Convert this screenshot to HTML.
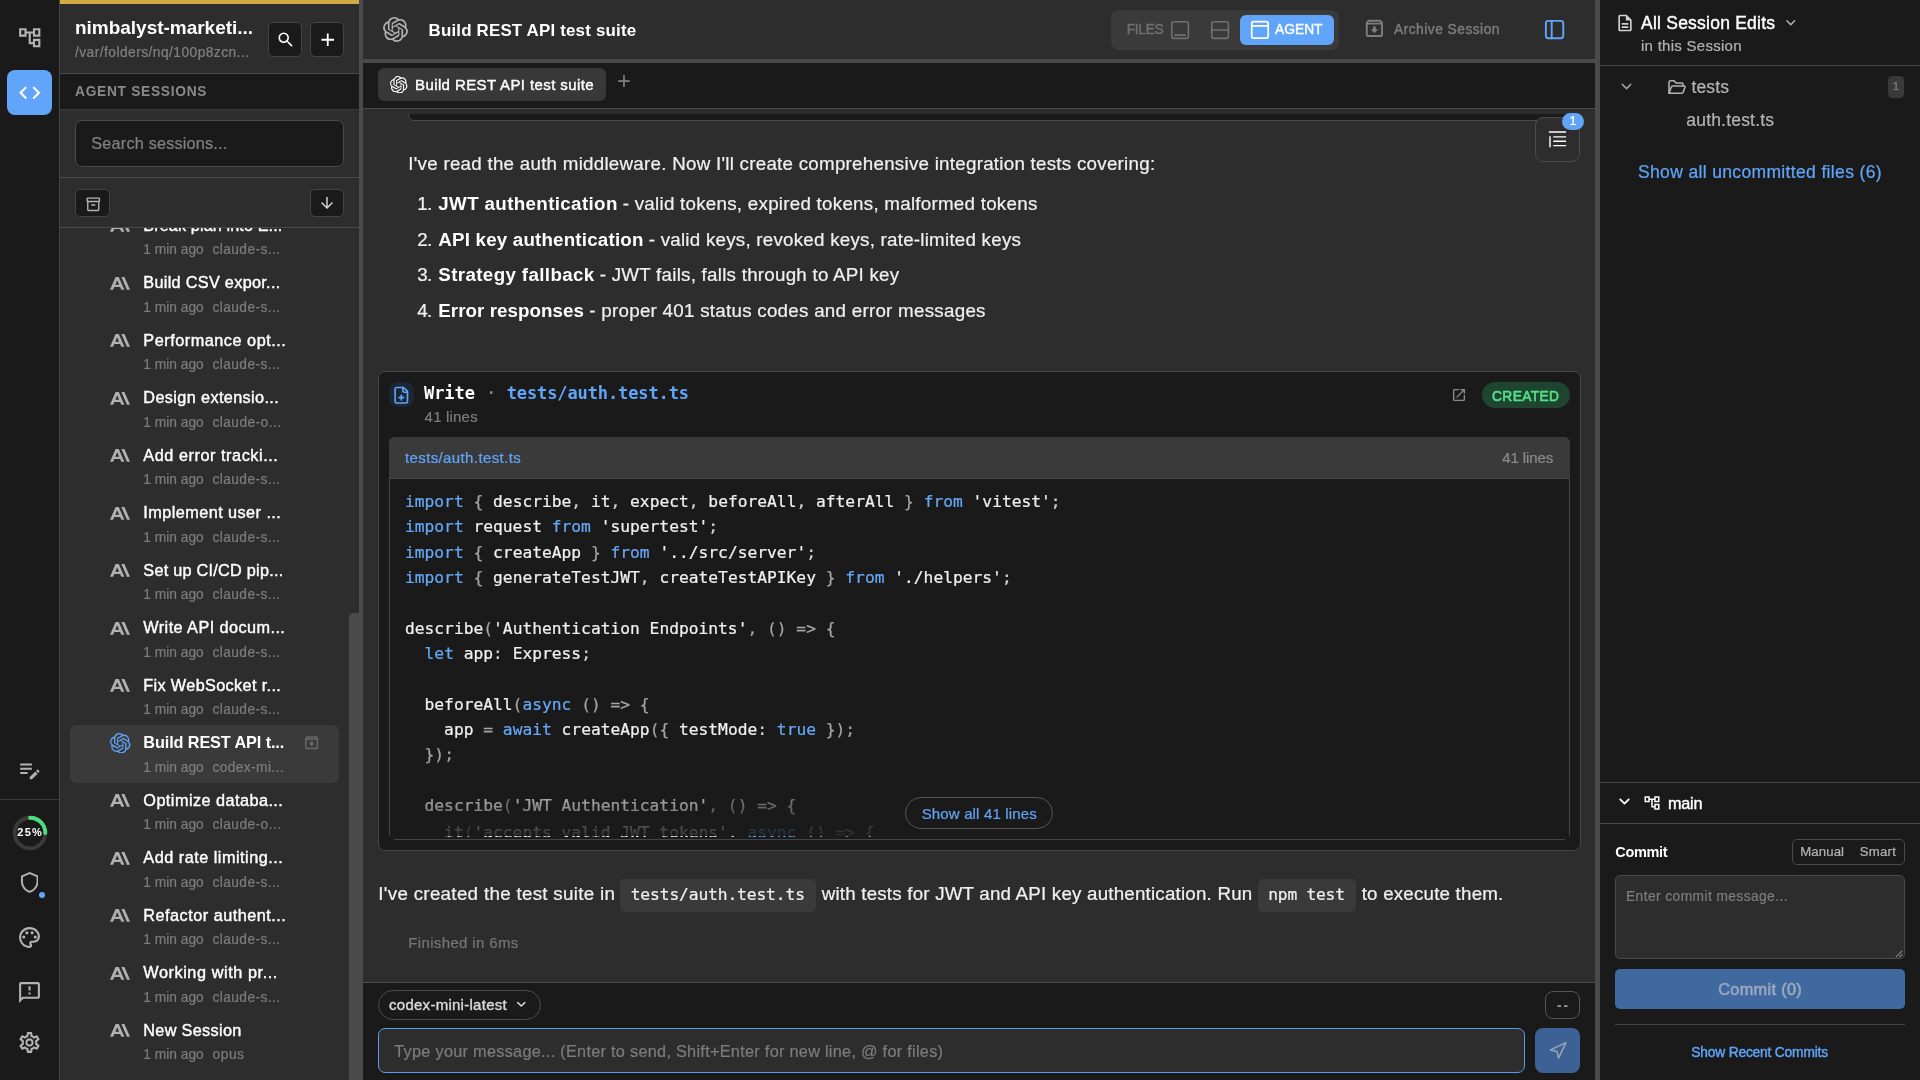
<!DOCTYPE html>
<html lang="en"><head><meta charset="utf-8"><title>Build REST API test suite</title>
<style>
*{margin:0;padding:0;box-sizing:border-box}
html,body{width:1920px;height:1080px;overflow:hidden;background:#2d2d2d}
body{position:relative;font-family:"Liberation Sans", sans-serif;-webkit-font-smoothing:antialiased}
#app{position:absolute;left:0;top:0;width:1920px;height:1080px;will-change:transform}
.b{position:absolute;display:block}
.t{position:absolute;white-space:pre;line-height:1}
.s{font-family:"Liberation Sans", sans-serif}
.m{font-family:"DejaVu Sans Mono", "Liberation Mono", monospace}
.r{-webkit-text-stroke:0.22px}
b{font-weight:700}
</style></head>
<body>
<div id="app">
<div class="b" style="left:0px;top:0px;width:59px;height:1080px;background:#1a1a1a;"></div>
<div class="b" style="left:59px;top:0px;width:1px;height:1080px;background:#464646;"></div>
<div class="b" style="left:60px;top:0px;width:299px;height:1080px;background:#2d2d2d;"></div>
<div class="b" style="left:359px;top:0px;width:4px;height:1080px;background:#4a4a4a;"></div>
<div class="b" style="left:363px;top:0px;width:1232px;height:1080px;background:#2d2d2d;"></div>
<div class="b" style="left:1595px;top:0px;width:5px;height:1080px;background:#4a4a4a;"></div>
<div class="b" style="left:1600px;top:0px;width:320px;height:1080px;background:#1a1a1a;"></div>
<svg class="b" style="left:16.6px;top:24.5px;" width="25.5" height="25.5" viewBox="0 0 24 24"><path fill="#b3b3b3" d="M22 11V3h-7v3H9V3H2v8h7V8h2v10h4v3h7v-8h-7v3h-2V8h2v3h7zM7 9H4V5h3v4zm10 6h3v4h-3v-4zm0-10h3v4h-3V5z"/></svg>
<div class="b" style="left:7px;top:70px;width:45px;height:45px;background:#60a5fa;border-radius:8px;"></div>
<svg class="b" style="left:16.75px;top:79.75px;" width="25.5" height="25.5" viewBox="0 0 24 24"><path fill="#ffffff" d="M9.4 16.6L4.8 12l4.6-4.6L8 6l-6 6 6 6 1.4-1.4zm5.2 0l4.6-4.6-4.6-4.6L16 6l6 6-6 6-1.4-1.4z"/></svg>
<svg class="b" style="left:17.4px;top:757.2px;" width="25.5" height="25.5" viewBox="0 0 24 24"><path fill="#b3b3b3" d="M3 10h11v2H3v-2zm0-2h11V6H3v2zm0 8h7v-2H3v2zm15.01-3.13l.71-.71c.39-.39 1.02-.39 1.41 0l.71.71c.39.39.39 1.02 0 1.41l-.71.71-2.12-2.12zm-.71.71l-5.3 5.3V21h2.12l5.3-5.3-2.12-2.12z"/></svg>
<div class="b" style="left:0px;top:799px;width:59px;height:1px;background:#3a3a3a;"></div>
<svg class="b" style="left:11.8px;top:814.6px;" width="36" height="36" viewBox="0 0 36 36"><circle cx="18" cy="18" r="15.3" fill="none" stroke="#3a3a3a" stroke-width="3.9"/><path d="M18 2.7 A15.3 15.3 0 0 1 33.3 18" fill="none" stroke="#4ade80" stroke-width="3.9" stroke-linecap="round"/></svg>
<div class="t s" style="top:827px;font-size:11px;color:#ffffff;font-weight:700;letter-spacing:1.23px;left:17.35px;">25%</div>
<svg class="b" style="left:20.8px;top:872px;" width="17.5" height="20.8" viewBox="3 1 18 22" preserveAspectRatio="none"><path fill="#b3b3b3" d="M12 1L3 5v6c0 5.55 3.84 10.74 9 12 5.16-1.26 9-6.45 9-12V5l-9-4zm0 2.18l7 3.12v4.7c0 4.52-2.98 8.69-7 9.93-4.02-1.24-7-5.41-7-9.93V6.3l7-3.12z"/></svg>
<div class="b" style="left:39px;top:892px;width:6.4px;height:6.4px;background:#60a5fa;border-radius:50%;"></div>
<svg class="b" style="left:17px;top:924.9px;" width="25" height="25" viewBox="0 0 24 24"><path fill="#b3b3b3" d="M12 22C6.49 22 2 17.51 2 12S6.49 2 12 2s10 4.04 10 9c0 3.31-2.69 6-6 6h-1.77c-.28 0-.5.22-.5.5 0 .12.05.23.13.33.41.47.64 1.06.64 1.67A2.5 2.5 0 0 1 12 22zm0-18c-4.41 0-8 3.59-8 8s3.59 8 8 8c.28 0 .5-.22.5-.5a.54.54 0 0 0-.14-.35c-.41-.46-.63-1.05-.63-1.65a2.5 2.5 0 0 1 2.5-2.5H16c2.21 0 4-1.79 4-4 0-3.86-3.59-7-8-7z"/></svg>
<svg class="b" style="left:17px;top:924.9px;" width="25" height="25" viewBox="0 0 24 24"><g fill="#b3b3b3"><circle cx="6.5" cy="11.5" r="1.5"/><circle cx="9.5" cy="7.5" r="1.5"/><circle cx="14.5" cy="7.5" r="1.5"/><circle cx="17.5" cy="11.5" r="1.5"/></g></svg>
<svg class="b" style="left:17px;top:979.7px;" width="25" height="25" viewBox="0 0 24 24"><path fill="#b3b3b3" d="M20 2H4c-1.1 0-1.99.9-1.99 2L2 22l4-4h14c1.1 0 2-.9 2-2V4c0-1.1-.9-2-2-2zm0 14H5.17L4 17.17V4h16v12zm-9-4h2v2h-2zm0-6h2v4h-2z"/></svg>
<svg class="b" style="left:17px;top:1030px;" width="25" height="25" viewBox="0 0 24 24"><path fill="#b3b3b3" d="M19.43 12.98c.04-.32.07-.64.07-.98 0-.34-.03-.66-.07-.98l2.11-1.65c.19-.15.24-.42.12-.64l-2-3.46a.5.5 0 0 0-.61-.22l-2.49 1c-.52-.4-1.08-.73-1.69-.98l-.38-2.65A.488.488 0 0 0 14 2h-4c-.25 0-.46.18-.49.42l-.38 2.65c-.61.25-1.17.59-1.69.98l-2.49-1a.566.566 0 0 0-.18-.03c-.17 0-.34.09-.43.25l-2 3.46c-.13.22-.07.49.12.64l2.11 1.65c-.04.32-.07.65-.07.98 0 .33.03.66.07.98l-2.11 1.65c-.19.15-.24.42-.12.64l2 3.46a.5.5 0 0 0 .61.22l2.49-1c.52.4 1.08.73 1.69.98l.38 2.65c.03.24.24.42.49.42h4c.25 0 .46-.18.49-.42l.38-2.65c.61-.25 1.17-.59 1.69-.98l2.49 1c.06.02.12.03.18.03.17 0 .34-.09.43-.25l2-3.46c.12-.22.07-.49-.12-.64l-2.11-1.65zm-1.98-1.71c.04.31.05.52.05.73 0 .21-.02.43-.05.73l-.14 1.13.89.7 1.08.84-.7 1.21-1.27-.51-1.04-.42-.9.68c-.43.32-.84.56-1.25.73l-1.06.43-.16 1.13-.2 1.35h-1.4l-.19-1.35-.16-1.13-1.06-.43c-.43-.18-.83-.41-1.23-.71l-.91-.7-1.06.43-1.27.51-.7-1.21 1.08-.84.89-.7-.14-1.13c-.03-.31-.05-.54-.05-.74s.02-.43.05-.73l.14-1.13-.89-.7-1.08-.84.7-1.21 1.27.51 1.04.42.9-.68c.43-.32.84-.56 1.25-.73l1.06-.43.16-1.13.2-1.35h1.39l.19 1.35.16 1.13 1.06.43c.43.18.83.41 1.23.71l.91.7 1.06-.43 1.27-.51.7 1.21-1.07.85-.89.7.14 1.13zM12 8c-2.21 0-4 1.79-4 4s1.79 4 4 4 4-1.79 4-4-1.79-4-4-4zm0 6c-1.1 0-2-.9-2-2s.9-2 2-2 2 .9 2 2-.9 2-2 2z"/></svg>
<div class="b" style="left:59.6px;top:0px;width:299.4px;height:4px;background:#cfaa47;"></div>
<div class="t s" style="top:18px;font-size:19px;color:#ffffff;font-weight:700;letter-spacing:-0.02px;left:75px;">nimbalyst-marketi...</div>
<div class="t s r" style="top:46px;font-size:13.75px;color:#808080;letter-spacing:0.46px;left:75px;">/var/folders/nq/100p8zcn...</div>
<div class="b" style="left:268px;top:22px;width:34px;height:35px;background:#1a1a1a;border:1px solid #444444;border-radius:5px;"></div>
<svg class="b" style="left:275.5px;top:30px;" width="19.5" height="19.5" viewBox="0 0 24 24"><path fill="#ffffff" d="M15.5 14h-.79l-.28-.27A6.471 6.471 0 0 0 16 9.5 6.5 6.5 0 1 0 9.5 16c1.61 0 3.09-.59 4.23-1.57l.27.28v.79l5 4.99L20.49 19l-4.99-5zm-6 0C7.01 14 5 11.99 5 9.5S7.01 5 9.5 5 14 7.01 14 9.5 11.99 14 9.5 14z"/></svg>
<div class="b" style="left:310px;top:22px;width:34px;height:35px;background:#1a1a1a;border:1px solid #444444;border-radius:5px;"></div>
<svg class="b" style="left:316.5px;top:29px;" width="21.5" height="21.5" viewBox="0 0 24 24"><path fill="#ffffff" d="M19 13h-6v6h-2v-6H5v-2h6V5h2v6h6v2z"/></svg>
<div class="b" style="left:60px;top:73px;width:299px;height:1px;background:#4a4a4a;"></div>
<div class="b" style="left:60px;top:74px;width:299px;height:35px;background:#1a1a1a;"></div>
<div class="t s" style="top:85px;font-size:13.75px;color:#8a8a8a;font-weight:700;letter-spacing:0.71px;left:75px;">AGENT SESSIONS</div>
<div class="b" style="left:60px;top:109px;width:299px;height:1px;background:#3a3a3a;"></div>
<div class="b" style="left:75px;top:120px;width:269px;height:46.5px;background:#1a1a1a;border:1px solid #4a4a4a;border-radius:7px;"></div>
<div class="t s r" style="top:135px;font-size:16.25px;color:#808080;letter-spacing:0.19px;left:91.3px;">Search sessions...</div>
<div class="b" style="left:60px;top:177px;width:299px;height:1px;background:#4a4a4a;"></div>
<div class="b" style="left:75px;top:188.5px;width:34.5px;height:28px;background:#1a1a1a;border:1px solid #444444;border-radius:5px;"></div>
<svg class="b" style="left:84.5px;top:195.5px;" width="16.5" height="16.5" viewBox="0 0 24 24"><path fill="#b3b3b3" d="M20 2H4c-1 0-2 .9-2 2v3.01c0 .72.43 1.34 1 1.69V20c0 1.1 1.1 2 2 2h14c.9 0 2-.9 2-2V8.7c.57-.35 1-.97 1-1.69V4c0-1.1-1-2-2-2zm-1 18H5V9h14v11zm1-13H4V4h16v3zM9 12h6v2H9z"/></svg>
<div class="b" style="left:310px;top:188.5px;width:34px;height:28px;background:#1a1a1a;border:1px solid #444444;border-radius:5px;"></div>
<svg class="b" style="left:318.1px;top:194.3px;" width="18" height="18" viewBox="0 0 24 24"><path fill="#d0d0d0" d="M20 12l-1.41-1.41L13 16.17V4h-2v12.17l-5.58-5.59L4 12l8 8 8-8z"/></svg>
<div class="b" style="left:60px;top:227px;width:299px;height:1px;background:#4a4a4a;"></div>
<div class="b" style="left:60px;top:228px;width:299px;height:852px;overflow:hidden">
<svg class="b" style="left:50px;top:-8.6px;" width="20" height="12.8" viewBox="0 3.54 24 16.92" preserveAspectRatio="none"><path fill="#b0b0b0" d="M17.3041 3.541h-3.6718l6.696 16.918H24Zm-10.6082 0L0 20.459h3.7442l1.3693-3.5527h7.0052l1.3693 3.5528h3.7442L10.5363 3.5409Zm-.3712 10.2232 2.2914-5.9456 2.2914 5.9456Z"/></svg>
<div class="t s" style="top:-11px;font-size:16.25px;color:#ffffff;-webkit-text-stroke:0.4px;letter-spacing:0.09px;left:83.3px;">Break plan into E...</div>
<div class="t s r" style="top:15px;font-size:13.75px;color:#7c7c7c;letter-spacing:0.01px;left:83.3px;">1 min ago</div>
<div class="t s r" style="top:15px;font-size:13.75px;color:#7c7c7c;letter-spacing:0.41px;left:152.5px;">claude-s...</div>
<svg class="b" style="left:50px;top:48.9px;" width="20" height="12.8" viewBox="0 3.54 24 16.92" preserveAspectRatio="none"><path fill="#b0b0b0" d="M17.3041 3.541h-3.6718l6.696 16.918H24Zm-10.6082 0L0 20.459h3.7442l1.3693-3.5527h7.0052l1.3693 3.5528h3.7442L10.5363 3.5409Zm-.3712 10.2232 2.2914-5.9456 2.2914 5.9456Z"/></svg>
<div class="t s" style="top:46px;font-size:16.25px;color:#ffffff;-webkit-text-stroke:0.4px;letter-spacing:0.3px;left:83.3px;">Build CSV expor...</div>
<div class="t s r" style="top:73px;font-size:13.75px;color:#7c7c7c;letter-spacing:0.01px;left:83.3px;">1 min ago</div>
<div class="t s r" style="top:73px;font-size:13.75px;color:#7c7c7c;letter-spacing:0.41px;left:152.5px;">claude-s...</div>
<svg class="b" style="left:50px;top:106.4px;" width="20" height="12.8" viewBox="0 3.54 24 16.92" preserveAspectRatio="none"><path fill="#b0b0b0" d="M17.3041 3.541h-3.6718l6.696 16.918H24Zm-10.6082 0L0 20.459h3.7442l1.3693-3.5527h7.0052l1.3693 3.5528h3.7442L10.5363 3.5409Zm-.3712 10.2232 2.2914-5.9456 2.2914 5.9456Z"/></svg>
<div class="t s" style="top:104px;font-size:16.25px;color:#ffffff;-webkit-text-stroke:0.4px;letter-spacing:0.52px;left:83.3px;">Performance opt...</div>
<div class="t s r" style="top:130px;font-size:13.75px;color:#7c7c7c;letter-spacing:0.01px;left:83.3px;">1 min ago</div>
<div class="t s r" style="top:130px;font-size:13.75px;color:#7c7c7c;letter-spacing:0.41px;left:152.5px;">claude-s...</div>
<svg class="b" style="left:50px;top:163.9px;" width="20" height="12.8" viewBox="0 3.54 24 16.92" preserveAspectRatio="none"><path fill="#b0b0b0" d="M17.3041 3.541h-3.6718l6.696 16.918H24Zm-10.6082 0L0 20.459h3.7442l1.3693-3.5527h7.0052l1.3693 3.5528h3.7442L10.5363 3.5409Zm-.3712 10.2232 2.2914-5.9456 2.2914 5.9456Z"/></svg>
<div class="t s" style="top:161px;font-size:16.25px;color:#ffffff;-webkit-text-stroke:0.4px;letter-spacing:0.37px;left:83.3px;">Design extensio...</div>
<div class="t s r" style="top:188px;font-size:13.75px;color:#7c7c7c;letter-spacing:0.01px;left:83.3px;">1 min ago</div>
<div class="t s r" style="top:188px;font-size:13.75px;color:#7c7c7c;letter-spacing:0.43px;left:152.5px;">claude-o...</div>
<svg class="b" style="left:50px;top:221.4px;" width="20" height="12.8" viewBox="0 3.54 24 16.92" preserveAspectRatio="none"><path fill="#b0b0b0" d="M17.3041 3.541h-3.6718l6.696 16.918H24Zm-10.6082 0L0 20.459h3.7442l1.3693-3.5527h7.0052l1.3693 3.5528h3.7442L10.5363 3.5409Zm-.3712 10.2232 2.2914-5.9456 2.2914 5.9456Z"/></svg>
<div class="t s" style="top:219px;font-size:16.25px;color:#ffffff;-webkit-text-stroke:0.4px;letter-spacing:0.55px;left:83.3px;">Add error tracki...</div>
<div class="t s r" style="top:245px;font-size:13.75px;color:#7c7c7c;letter-spacing:0.01px;left:83.3px;">1 min ago</div>
<div class="t s r" style="top:245px;font-size:13.75px;color:#7c7c7c;letter-spacing:0.41px;left:152.5px;">claude-s...</div>
<svg class="b" style="left:50px;top:278.9px;" width="20" height="12.8" viewBox="0 3.54 24 16.92" preserveAspectRatio="none"><path fill="#b0b0b0" d="M17.3041 3.541h-3.6718l6.696 16.918H24Zm-10.6082 0L0 20.459h3.7442l1.3693-3.5527h7.0052l1.3693 3.5528h3.7442L10.5363 3.5409Zm-.3712 10.2232 2.2914-5.9456 2.2914 5.9456Z"/></svg>
<div class="t s" style="top:276px;font-size:16.25px;color:#ffffff;-webkit-text-stroke:0.4px;letter-spacing:0.44px;left:83.3px;">Implement user ...</div>
<div class="t s r" style="top:303px;font-size:13.75px;color:#7c7c7c;letter-spacing:0.01px;left:83.3px;">1 min ago</div>
<div class="t s r" style="top:303px;font-size:13.75px;color:#7c7c7c;letter-spacing:0.41px;left:152.5px;">claude-s...</div>
<svg class="b" style="left:50px;top:336.4px;" width="20" height="12.8" viewBox="0 3.54 24 16.92" preserveAspectRatio="none"><path fill="#b0b0b0" d="M17.3041 3.541h-3.6718l6.696 16.918H24Zm-10.6082 0L0 20.459h3.7442l1.3693-3.5527h7.0052l1.3693 3.5528h3.7442L10.5363 3.5409Zm-.3712 10.2232 2.2914-5.9456 2.2914 5.9456Z"/></svg>
<div class="t s" style="top:334px;font-size:16.25px;color:#ffffff;-webkit-text-stroke:0.4px;letter-spacing:0.25px;left:83.3px;">Set up CI/CD pip...</div>
<div class="t s r" style="top:360px;font-size:13.75px;color:#7c7c7c;letter-spacing:0.01px;left:83.3px;">1 min ago</div>
<div class="t s r" style="top:360px;font-size:13.75px;color:#7c7c7c;letter-spacing:0.41px;left:152.5px;">claude-s...</div>
<svg class="b" style="left:50px;top:393.9px;" width="20" height="12.8" viewBox="0 3.54 24 16.92" preserveAspectRatio="none"><path fill="#b0b0b0" d="M17.3041 3.541h-3.6718l6.696 16.918H24Zm-10.6082 0L0 20.459h3.7442l1.3693-3.5527h7.0052l1.3693 3.5528h3.7442L10.5363 3.5409Zm-.3712 10.2232 2.2914-5.9456 2.2914 5.9456Z"/></svg>
<div class="t s" style="top:391px;font-size:16.25px;color:#ffffff;-webkit-text-stroke:0.4px;letter-spacing:0.43px;left:83.3px;">Write API docum...</div>
<div class="t s r" style="top:418px;font-size:13.75px;color:#7c7c7c;letter-spacing:0.01px;left:83.3px;">1 min ago</div>
<div class="t s r" style="top:418px;font-size:13.75px;color:#7c7c7c;letter-spacing:0.41px;left:152.5px;">claude-s...</div>
<svg class="b" style="left:50px;top:451.4px;" width="20" height="12.8" viewBox="0 3.54 24 16.92" preserveAspectRatio="none"><path fill="#b0b0b0" d="M17.3041 3.541h-3.6718l6.696 16.918H24Zm-10.6082 0L0 20.459h3.7442l1.3693-3.5527h7.0052l1.3693 3.5528h3.7442L10.5363 3.5409Zm-.3712 10.2232 2.2914-5.9456 2.2914 5.9456Z"/></svg>
<div class="t s" style="top:449px;font-size:16.25px;color:#ffffff;-webkit-text-stroke:0.4px;letter-spacing:0.35px;left:83.3px;">Fix WebSocket r...</div>
<div class="t s r" style="top:475px;font-size:13.75px;color:#7c7c7c;letter-spacing:0.01px;left:83.3px;">1 min ago</div>
<div class="t s r" style="top:475px;font-size:13.75px;color:#7c7c7c;letter-spacing:0.41px;left:152.5px;">claude-s...</div>
<div class="b" style="left:10px;top:497px;width:269px;height:57.5px;background:#3a3a3a;border-radius:6px;"></div>
<svg class="b" style="left:50px;top:504.9px;" width="20.5" height="20.5" viewBox="0 0 24 24"><path fill="#60a5fa" d="M22.2819 9.8211a5.9847 5.9847 0 0 0-.5157-4.9108 6.0462 6.0462 0 0 0-6.5098-2.9A6.0651 6.0651 0 0 0 4.9807 4.1818a5.9847 5.9847 0 0 0-3.9977 2.9 6.0462 6.0462 0 0 0 .7427 7.0966 5.98 5.98 0 0 0 .511 4.9107 6.051 6.051 0 0 0 6.5146 2.9001A5.9847 5.9847 0 0 0 13.2599 24a6.0557 6.0557 0 0 0 5.7718-4.2058 5.9894 5.9894 0 0 0 3.9977-2.9001 6.0557 6.0557 0 0 0-.7475-7.0729zm-9.022 12.6081a4.4755 4.4755 0 0 1-2.8764-1.0408l.1419-.0804 4.7783-2.7582a.7948.7948 0 0 0 .3927-.6813v-6.7369l2.02 1.1686a.071.071 0 0 1 .038.052v5.5826a4.504 4.504 0 0 1-4.4945 4.4944zm-9.6607-4.1254a4.4708 4.4708 0 0 1-.5346-3.0137l.142.0852 4.783 2.7582a.7712.7712 0 0 0 .7806 0l5.8428-3.3685v2.3324a.0804.0804 0 0 1-.0332.0615L9.74 19.9502a4.4992 4.4992 0 0 1-6.1408-1.6464zM2.3408 7.8956a4.485 4.485 0 0 1 2.3655-1.9728V11.6a.7664.7664 0 0 0 .3879.6765l5.8144 3.3543-2.0201 1.1685a.0757.0757 0 0 1-.071 0l-4.8303-2.7865A4.504 4.504 0 0 1 2.3408 7.872zm16.5963 3.8558L13.1038 8.364 15.1192 7.2a.0757.0757 0 0 1 .071 0l4.8303 2.7913a4.4944 4.4944 0 0 1-.6765 8.1042v-5.6772a.79.79 0 0 0-.407-.667zm2.0107-3.0231l-.142-.0852-4.7735-2.7818a.7759.7759 0 0 0-.7854 0L9.409 9.2297V6.8974a.0662.0662 0 0 1 .0284-.0615l4.8303-2.7866a4.4992 4.4992 0 0 1 6.6802 4.66zM8.3065 12.863l-2.02-1.1638a.0804.0804 0 0 1-.038-.0567V6.0742a4.4992 4.4992 0 0 1 7.3757-3.4537l-.142.0805L8.704 5.459a.7948.7948 0 0 0-.3927.6813zm1.0976-2.3654l2.602-1.4998 2.6069 1.4998v2.9994l-2.5974 1.4997-2.6067-1.4997Z"/></svg>
<div class="t s" style="top:506px;font-size:16.25px;color:#ffffff;font-weight:700;letter-spacing:-0.11px;left:83.3px;">Build REST API t...</div>
<div class="t s r" style="top:533px;font-size:13.75px;color:#7c7c7c;letter-spacing:0.01px;left:83.3px;">1 min ago</div>
<div class="t s r" style="top:533px;font-size:13.75px;color:#7c7c7c;letter-spacing:0.38px;left:152.5px;">codex-mi...</div>
<svg class="b" style="left:242.8px;top:505.8px;" width="17.3" height="17.3" viewBox="0 0 24 24"><path fill="#6a6a6a" d="M20.54 5.23l-1.39-1.68C18.88 3.21 18.47 3 18 3H6c-.47 0-.88.21-1.16.55L3.46 5.23C3.17 5.57 3 6.02 3 6.5V19c0 1.1.9 2 2 2h14c1.1 0 2-.9 2-2V6.5c0-.48-.17-.93-.46-1.27zM6.24 5h11.52l.81.97H5.44l.8-.97zM5 19V8h14v11H5zm8.450-9h-2.9v3H8l4 4 4-4h-2.55v-3z"/></svg>
<svg class="b" style="left:50px;top:566.4px;" width="20" height="12.8" viewBox="0 3.54 24 16.92" preserveAspectRatio="none"><path fill="#b0b0b0" d="M17.3041 3.541h-3.6718l6.696 16.918H24Zm-10.6082 0L0 20.459h3.7442l1.3693-3.5527h7.0052l1.3693 3.5528h3.7442L10.5363 3.5409Zm-.3712 10.2232 2.2914-5.9456 2.2914 5.9456Z"/></svg>
<div class="t s" style="top:564px;font-size:16.25px;color:#ffffff;-webkit-text-stroke:0.4px;letter-spacing:0.45px;left:83.3px;">Optimize databa...</div>
<div class="t s r" style="top:590px;font-size:13.75px;color:#7c7c7c;letter-spacing:0.01px;left:83.3px;">1 min ago</div>
<div class="t s r" style="top:590px;font-size:13.75px;color:#7c7c7c;letter-spacing:0.43px;left:152.5px;">claude-o...</div>
<svg class="b" style="left:50px;top:623.9px;" width="20" height="12.8" viewBox="0 3.54 24 16.92" preserveAspectRatio="none"><path fill="#b0b0b0" d="M17.3041 3.541h-3.6718l6.696 16.918H24Zm-10.6082 0L0 20.459h3.7442l1.3693-3.5527h7.0052l1.3693 3.5528h3.7442L10.5363 3.5409Zm-.3712 10.2232 2.2914-5.9456 2.2914 5.9456Z"/></svg>
<div class="t s" style="top:621px;font-size:16.25px;color:#ffffff;-webkit-text-stroke:0.4px;letter-spacing:0.5px;left:83.3px;">Add rate limiting...</div>
<div class="t s r" style="top:648px;font-size:13.75px;color:#7c7c7c;letter-spacing:0.01px;left:83.3px;">1 min ago</div>
<div class="t s r" style="top:648px;font-size:13.75px;color:#7c7c7c;letter-spacing:0.41px;left:152.5px;">claude-s...</div>
<svg class="b" style="left:50px;top:681.4px;" width="20" height="12.8" viewBox="0 3.54 24 16.92" preserveAspectRatio="none"><path fill="#b0b0b0" d="M17.3041 3.541h-3.6718l6.696 16.918H24Zm-10.6082 0L0 20.459h3.7442l1.3693-3.5527h7.0052l1.3693 3.5528h3.7442L10.5363 3.5409Zm-.3712 10.2232 2.2914-5.9456 2.2914 5.9456Z"/></svg>
<div class="t s" style="top:679px;font-size:16.25px;color:#ffffff;-webkit-text-stroke:0.4px;letter-spacing:0.49px;left:83.3px;">Refactor authent...</div>
<div class="t s r" style="top:705px;font-size:13.75px;color:#7c7c7c;letter-spacing:0.01px;left:83.3px;">1 min ago</div>
<div class="t s r" style="top:705px;font-size:13.75px;color:#7c7c7c;letter-spacing:0.41px;left:152.5px;">claude-s...</div>
<svg class="b" style="left:50px;top:738.9px;" width="20" height="12.8" viewBox="0 3.54 24 16.92" preserveAspectRatio="none"><path fill="#b0b0b0" d="M17.3041 3.541h-3.6718l6.696 16.918H24Zm-10.6082 0L0 20.459h3.7442l1.3693-3.5527h7.0052l1.3693 3.5528h3.7442L10.5363 3.5409Zm-.3712 10.2232 2.2914-5.9456 2.2914 5.9456Z"/></svg>
<div class="t s" style="top:736px;font-size:16.25px;color:#ffffff;-webkit-text-stroke:0.4px;letter-spacing:0.57px;left:83.3px;">Working with pr...</div>
<div class="t s r" style="top:763px;font-size:13.75px;color:#7c7c7c;letter-spacing:0.01px;left:83.3px;">1 min ago</div>
<div class="t s r" style="top:763px;font-size:13.75px;color:#7c7c7c;letter-spacing:0.41px;left:152.5px;">claude-s...</div>
<svg class="b" style="left:50px;top:796.4px;" width="20" height="12.8" viewBox="0 3.54 24 16.92" preserveAspectRatio="none"><path fill="#b0b0b0" d="M17.3041 3.541h-3.6718l6.696 16.918H24Zm-10.6082 0L0 20.459h3.7442l1.3693-3.5527h7.0052l1.3693 3.5528h3.7442L10.5363 3.5409Zm-.3712 10.2232 2.2914-5.9456 2.2914 5.9456Z"/></svg>
<div class="t s" style="top:794px;font-size:16.25px;color:#ffffff;-webkit-text-stroke:0.4px;letter-spacing:0.32px;left:83.3px;">New Session</div>
<div class="t s r" style="top:820px;font-size:13.75px;color:#7c7c7c;letter-spacing:0.01px;left:83.3px;">1 min ago</div>
<div class="t s r" style="top:820px;font-size:13.75px;color:#7c7c7c;letter-spacing:0.56px;left:152.5px;">opus</div>
</div>
<div class="b" style="left:349px;top:613px;width:10px;height:467px;background:#4a4a4a;border-radius:5px 0 0 0;"></div>
<div class="b" style="left:363px;top:59px;width:1232px;height:4px;background:#4a4a4a;"></div>
<svg class="b" style="left:383px;top:17px;" width="25" height="25" viewBox="0 0 24 24"><path fill="#b3b3b3" d="M22.2819 9.8211a5.9847 5.9847 0 0 0-.5157-4.9108 6.0462 6.0462 0 0 0-6.5098-2.9A6.0651 6.0651 0 0 0 4.9807 4.1818a5.9847 5.9847 0 0 0-3.9977 2.9 6.0462 6.0462 0 0 0 .7427 7.0966 5.98 5.98 0 0 0 .511 4.9107 6.051 6.051 0 0 0 6.5146 2.9001A5.9847 5.9847 0 0 0 13.2599 24a6.0557 6.0557 0 0 0 5.7718-4.2058 5.9894 5.9894 0 0 0 3.9977-2.9001 6.0557 6.0557 0 0 0-.7475-7.0729zm-9.022 12.6081a4.4755 4.4755 0 0 1-2.8764-1.0408l.1419-.0804 4.7783-2.7582a.7948.7948 0 0 0 .3927-.6813v-6.7369l2.02 1.1686a.071.071 0 0 1 .038.052v5.5826a4.504 4.504 0 0 1-4.4945 4.4944zm-9.6607-4.1254a4.4708 4.4708 0 0 1-.5346-3.0137l.142.0852 4.783 2.7582a.7712.7712 0 0 0 .7806 0l5.8428-3.3685v2.3324a.0804.0804 0 0 1-.0332.0615L9.74 19.9502a4.4992 4.4992 0 0 1-6.1408-1.6464zM2.3408 7.8956a4.485 4.485 0 0 1 2.3655-1.9728V11.6a.7664.7664 0 0 0 .3879.6765l5.8144 3.3543-2.0201 1.1685a.0757.0757 0 0 1-.071 0l-4.8303-2.7865A4.504 4.504 0 0 1 2.3408 7.872zm16.5963 3.8558L13.1038 8.364 15.1192 7.2a.0757.0757 0 0 1 .071 0l4.8303 2.7913a4.4944 4.4944 0 0 1-.6765 8.1042v-5.6772a.79.79 0 0 0-.407-.667zm2.0107-3.0231l-.142-.0852-4.7735-2.7818a.7759.7759 0 0 0-.7854 0L9.409 9.2297V6.8974a.0662.0662 0 0 1 .0284-.0615l4.8303-2.7866a4.4992 4.4992 0 0 1 6.6802 4.66zM8.3065 12.863l-2.02-1.1638a.0804.0804 0 0 1-.038-.0567V6.0742a4.4992 4.4992 0 0 1 7.3757-3.4537l-.142.0805L8.704 5.459a.7948.7948 0 0 0-.3927.6813zm1.0976-2.3654l2.602-1.4998 2.6069 1.4998v2.9994l-2.5974 1.4997-2.6067-1.4997Z"/></svg>
<div class="t s" style="top:23px;font-size:16.9px;color:#ffffff;font-weight:700;letter-spacing:0.19px;left:428.5px;">Build REST API test suite</div>
<div class="b" style="left:1111px;top:10px;width:227.5px;height:40px;background:#3a3a3a;border-radius:8px;"></div>
<div class="t s" style="top:23px;font-size:13.75px;color:#707070;-webkit-text-stroke:0.4px;letter-spacing:-0.3px;left:1126.7px;">FILES</div>
<svg class="b" style="left:1169.01px;top:18.81px;" width="22.17" height="22.17" viewBox="0 0 24 24"><g fill="none" stroke="#707070" stroke-width="1.7" stroke-linecap="round" stroke-linejoin="round"><rect x="3" y="3" width="18" height="18" rx="2"/><path d="M6.5 17.5h11"/></g></svg>
<svg class="b" style="left:1209.01px;top:18.81px;" width="22.17" height="22.17" viewBox="0 0 24 24"><g fill="none" stroke="#707070" stroke-width="1.7" stroke-linecap="round" stroke-linejoin="round"><rect x="3" y="3" width="18" height="18" rx="2"/><path d="M3.5 12h17"/></g></svg>
<div class="b" style="left:1240px;top:15px;width:94px;height:30px;background:#60a5fa;border-radius:6px;"></div>
<svg class="b" style="left:1249.13px;top:18.93px;" width="21.95" height="21.95" viewBox="0 0 24 24"><g fill="none" stroke="#ffffff" stroke-width="1.9" stroke-linecap="round" stroke-linejoin="round"><rect x="3" y="3" width="18" height="18" rx="2"/><path d="M3.5 7.5h17"/></g></svg>
<div class="t s" style="top:23px;font-size:13.75px;color:#ffffff;-webkit-text-stroke:0.4px;letter-spacing:0.03px;left:1275px;">AGENT</div>
<svg class="b" style="left:1363.25px;top:17.15px;" width="22.8" height="22.8" viewBox="0 0 24 24"><path fill="#7d7d7d" d="M20.54 5.23l-1.39-1.68C18.88 3.21 18.47 3 18 3H6c-.47 0-.88.21-1.16.55L3.46 5.23C3.17 5.57 3 6.02 3 6.5V19c0 1.1.9 2 2 2h14c1.1 0 2-.9 2-2V6.5c0-.48-.17-.93-.46-1.27zM6.24 5h11.52l.81.97H5.44l.8-.97zM5 19V8h14v11H5zm8.450-9h-2.9v3H8l4 4 4-4h-2.55v-3z"/></svg>
<div class="t s" style="top:23px;font-size:13.75px;color:#7d7d7d;-webkit-text-stroke:0.4px;letter-spacing:0.49px;left:1394px;">Archive Session</div>
<svg class="b" style="left:1543.37px;top:17.87px;" width="23.16" height="23.16" viewBox="0 0 24 24"><g fill="none" stroke="#60a5fa" stroke-width="2" stroke-linecap="round" stroke-linejoin="round"><rect x="3" y="3" width="18" height="18" rx="2.5"/><path d="M9 3v18"/></g></svg>
<div class="b" style="left:408px;top:100px;width:1172px;height:21px;background:#1a1a1a;border:1px solid #4a4a4a;border-radius:6px;"></div>
<div class="b" style="left:363px;top:109px;width:1232px;height:5.2px;background:#2d2d2d;"></div>
<div class="b" style="left:363px;top:63px;width:1232px;height:45px;background:#1a1a1a;"></div>
<div class="b" style="left:363px;top:108px;width:1232px;height:1px;background:#4a4a4a;"></div>
<div class="b" style="left:378px;top:68px;width:228px;height:33px;background:#383838;border-radius:6px;"></div>
<svg class="b" style="left:390px;top:75.5px;" width="17.5" height="17.5" viewBox="0 0 24 24"><path fill="#ffffff" d="M22.2819 9.8211a5.9847 5.9847 0 0 0-.5157-4.9108 6.0462 6.0462 0 0 0-6.5098-2.9A6.0651 6.0651 0 0 0 4.9807 4.1818a5.9847 5.9847 0 0 0-3.9977 2.9 6.0462 6.0462 0 0 0 .7427 7.0966 5.98 5.98 0 0 0 .511 4.9107 6.051 6.051 0 0 0 6.5146 2.9001A5.9847 5.9847 0 0 0 13.2599 24a6.0557 6.0557 0 0 0 5.7718-4.2058 5.9894 5.9894 0 0 0 3.9977-2.9001 6.0557 6.0557 0 0 0-.7475-7.0729zm-9.022 12.6081a4.4755 4.4755 0 0 1-2.8764-1.0408l.1419-.0804 4.7783-2.7582a.7948.7948 0 0 0 .3927-.6813v-6.7369l2.02 1.1686a.071.071 0 0 1 .038.052v5.5826a4.504 4.504 0 0 1-4.4945 4.4944zm-9.6607-4.1254a4.4708 4.4708 0 0 1-.5346-3.0137l.142.0852 4.783 2.7582a.7712.7712 0 0 0 .7806 0l5.8428-3.3685v2.3324a.0804.0804 0 0 1-.0332.0615L9.74 19.9502a4.4992 4.4992 0 0 1-6.1408-1.6464zM2.3408 7.8956a4.485 4.485 0 0 1 2.3655-1.9728V11.6a.7664.7664 0 0 0 .3879.6765l5.8144 3.3543-2.0201 1.1685a.0757.0757 0 0 1-.071 0l-4.8303-2.7865A4.504 4.504 0 0 1 2.3408 7.872zm16.5963 3.8558L13.1038 8.364 15.1192 7.2a.0757.0757 0 0 1 .071 0l4.8303 2.7913a4.4944 4.4944 0 0 1-.6765 8.1042v-5.6772a.79.79 0 0 0-.407-.667zm2.0107-3.0231l-.142-.0852-4.7735-2.7818a.7759.7759 0 0 0-.7854 0L9.409 9.2297V6.8974a.0662.0662 0 0 1 .0284-.0615l4.8303-2.7866a4.4992 4.4992 0 0 1 6.6802 4.66zM8.3065 12.863l-2.02-1.1638a.0804.0804 0 0 1-.038-.0567V6.0742a4.4992 4.4992 0 0 1 7.3757-3.4537l-.142.0805L8.704 5.459a.7948.7948 0 0 0-.3927.6813zm1.0976-2.3654l2.602-1.4998 2.6069 1.4998v2.9994l-2.5974 1.4997-2.6067-1.4997Z"/></svg>
<div class="t s" style="top:77px;font-size:15px;color:#ffffff;-webkit-text-stroke:0.4px;letter-spacing:0.4px;left:415px;">Build REST API test suite</div>
<div class="t s r" style="top:70px;font-size:23px;color:#7d7d7d;left:617.2px;">+</div>
<div class="b" style="left:1535px;top:117.2px;width:45px;height:44.5px;background:#2d2d2d;border:1px solid #4a4a4a;border-radius:8px;"></div>
<svg class="b" style="left:1546px;top:129px;" width="24" height="20" viewBox="0 0 24 20"><g stroke="#ffffff" stroke-width="1.4" fill="none"><path d="M2.9 3h17.2M4 7.2v11M7.3 7.9h12.8M7.3 12.3h12.8M7.3 16.6h12.8"/></g></svg>
<div class="b" style="left:1562px;top:113px;width:22px;height:17px;background:#60a5fa;border-radius:8.5px;"></div>
<div class="t s r" style="top:115px;font-size:12.5px;color:#ffffff;left:1569.52px;">1</div>
<div class="t s r" style="top:155px;font-size:18.75px;color:#f0f0f0;letter-spacing:0.26px;left:408.3px;">I've read the auth middleware. Now I'll create comprehensive integration tests covering:</div>
<div class="t s r" style="top:195px;font-size:18.75px;color:#f0f0f0;letter-spacing:-0.64px;left:417.3px;">1.</div>
<div class="t s" style="top:195px;font-size:18.75px;color:#ffffff;font-weight:700;letter-spacing:0.36px;left:438.3px;">JWT authentication</div>
<div class="t s r" style="top:195px;font-size:18.75px;color:#f0f0f0;letter-spacing:0.26px;left:617.3px;"> - valid tokens, expired tokens, malformed tokens</div>
<div class="t s r" style="top:231px;font-size:18.75px;color:#f0f0f0;letter-spacing:-0.64px;left:417.3px;">2.</div>
<div class="t s" style="top:231px;font-size:18.75px;color:#ffffff;font-weight:700;letter-spacing:0.19px;left:438.3px;">API key authentication</div>
<div class="t s r" style="top:231px;font-size:18.75px;color:#f0f0f0;letter-spacing:0.24px;left:643.3px;"> - valid keys, revoked keys, rate-limited keys</div>
<div class="t s r" style="top:266px;font-size:18.75px;color:#f0f0f0;letter-spacing:-0.64px;left:417.3px;">3.</div>
<div class="t s" style="top:266px;font-size:18.75px;color:#ffffff;font-weight:700;letter-spacing:0.37px;left:438.3px;">Strategy fallback</div>
<div class="t s r" style="top:266px;font-size:18.75px;color:#f0f0f0;letter-spacing:0.25px;left:594.3px;"> - JWT fails, falls through to API key</div>
<div class="t s r" style="top:302px;font-size:18.75px;color:#f0f0f0;letter-spacing:-0.64px;left:417.3px;">4.</div>
<div class="t s" style="top:302px;font-size:18.75px;color:#ffffff;font-weight:700;letter-spacing:0.05px;left:438.3px;">Error responses</div>
<div class="t s r" style="top:302px;font-size:18.75px;color:#f0f0f0;letter-spacing:0.27px;left:583.8px;"> - proper 401 status codes and error messages</div>
<div class="b" style="left:378px;top:371px;width:1203px;height:480px;background:#1a1a1a;border:1px solid #464646;border-radius:7px;"></div>
<div class="b" style="left:389px;top:381.7px;width:25px;height:25.6px;background:#1d2734;border-radius:8.5px;"></div>
<svg class="b" style="left:392.25px;top:385.8px;" width="18.6" height="18.6" viewBox="0 0 24 24"><g fill="none" stroke="#60a5fa" stroke-width="2.1" stroke-linecap="round" stroke-linejoin="round"><path d="M15 2H6a2 2 0 0 0-2 2v16a2 2 0 0 0 2 2h12a2 2 0 0 0 2-2V7Z"/><path d="M14 2v4a2 2 0 0 0 2 2h4"/><path d="M9 15h6"/><path d="M12 18v-6"/></g></svg>
<div class="t m" style="top:385px;font-size:17px;color:#ffffff;font-weight:700;letter-spacing:-0.05px;left:424px;">Write</div>
<div class="t m r" style="top:385px;font-size:17px;color:#8a8a8a;left:486px;">·</div>
<div class="t m" style="top:385px;font-size:17px;color:#60a5fa;font-weight:700;letter-spacing:-0.11px;left:506.7px;">tests/auth.test.ts</div>
<div class="t s r" style="top:409px;font-size:15px;color:#7c7c7c;letter-spacing:0.19px;left:424.6px;">41 lines</div>
<svg class="b" style="left:1451px;top:386.5px;" width="16" height="16" viewBox="0 0 24 24"><path fill="#8a8a8a" d="M19 19H5V5h7V3H5a2 2 0 0 0-2 2v14a2 2 0 0 0 2 2h14c1.1 0 2-.9 2-2v-7h-2v7zM14 3v2h3.59l-9.83 9.83 1.41 1.41L19 6.41V10h2V3h-7z"/></svg>
<div class="b" style="left:1481.7px;top:381.7px;width:88.3px;height:26.6px;background:#1e4530;border-radius:13.3px;"></div>
<div class="t s" style="top:390px;font-size:13.75px;color:#56e088;-webkit-text-stroke:0.6px;letter-spacing:0.39px;left:1492px;">CREATED</div>
<div class="b" style="left:389.3px;top:436.7px;width:1180.7px;height:403.3px;background:#1a1a1a;border:1px solid #454545;border-radius:6px;"></div>
<div class="b" style="left:389.3px;top:436.7px;width:1180.7px;height:41.6px;background:#3a3a3a;border-radius:6px 6px 0 0;"></div>
<div class="b" style="left:389.3px;top:478.3px;width:1180.7px;height:1px;background:#454545;"></div>
<div class="t s r" style="top:450px;font-size:15px;color:#60a5fa;letter-spacing:0.38px;left:405px;">tests/auth.test.ts</div>
<div class="t s r" style="top:450px;font-size:15px;color:#8a8a8a;letter-spacing:-0.1px;left:1502.3px;">41 lines</div>
<div class="b" style="left:390.3px;top:479px;width:1178.7px;height:357.6px;overflow:hidden">
<div class="t m r" style="top:15px;font-size:16.25px;color:#f0f0f0;left:14.7px;"><span style="color:#66a8f7">import</span> <span style="color:#a6a6a6">{</span> describe<span style="color:#d2d2d2">,</span> it<span style="color:#d2d2d2">,</span> expect<span style="color:#d2d2d2">,</span> beforeAll<span style="color:#d2d2d2">,</span> afterAll <span style="color:#a6a6a6">}</span> <span style="color:#66a8f7">from</span> 'vitest'<span style="color:#d2d2d2">;</span></div>
<div class="t m r" style="top:40px;font-size:16.25px;color:#f0f0f0;left:14.7px;"><span style="color:#66a8f7">import</span> request <span style="color:#66a8f7">from</span> 'supertest'<span style="color:#d2d2d2">;</span></div>
<div class="t m r" style="top:66px;font-size:16.25px;color:#f0f0f0;left:14.7px;"><span style="color:#66a8f7">import</span> <span style="color:#a6a6a6">{</span> createApp <span style="color:#a6a6a6">}</span> <span style="color:#66a8f7">from</span> '../src/server'<span style="color:#d2d2d2">;</span></div>
<div class="t m r" style="top:91px;font-size:16.25px;color:#f0f0f0;left:14.7px;"><span style="color:#66a8f7">import</span> <span style="color:#a6a6a6">{</span> generateTestJWT<span style="color:#d2d2d2">,</span> createTestAPIKey <span style="color:#a6a6a6">}</span> <span style="color:#66a8f7">from</span> './helpers'<span style="color:#d2d2d2">;</span></div>
<div class="t m r" style="top:142px;font-size:16.25px;color:#f0f0f0;left:14.7px;">describe<span style="color:#a6a6a6">(</span>'Authentication Endpoints'<span style="color:#a6a6a6">, () =&gt; {</span></div>
<div class="t m r" style="top:167px;font-size:16.25px;color:#f0f0f0;left:14.7px;">  <span style="color:#66a8f7">let</span> app<span style="color:#d2d2d2">:</span> Express<span style="color:#d2d2d2">;</span></div>
<div class="t m r" style="top:218px;font-size:16.25px;color:#f0f0f0;left:14.7px;">  beforeAll<span style="color:#a6a6a6">(</span><span style="color:#66a8f7">async</span> <span style="color:#a6a6a6">() =&gt; {</span></div>
<div class="t m r" style="top:243px;font-size:16.25px;color:#f0f0f0;left:14.7px;">    app <span style="color:#a6a6a6">=</span> <span style="color:#66a8f7">await</span> createApp<span style="color:#a6a6a6">({</span> testMode<span style="color:#d2d2d2">:</span> <span style="color:#66a8f7">true</span> <span style="color:#a6a6a6">});</span></div>
<div class="t m r" style="top:268px;font-size:16.25px;color:#f0f0f0;left:14.7px;">  <span style="color:#a6a6a6">});</span></div>
<div class="t m r" style="top:319px;font-size:16.25px;color:#f0f0f0;left:14.7px;">  describe<span style="color:#a6a6a6">(</span>'JWT Authentication'<span style="color:#a6a6a6">, () =&gt; {</span></div>
<div class="t m r" style="top:346px;font-size:16.25px;color:#f0f0f0;left:14.7px;">    it<span style="color:#a6a6a6">(</span>'accepts valid JWT tokens'<span style="color:#d2d2d2">, </span><span style="color:#66a8f7">async</span> <span style="color:#a6a6a6">() =&gt; {</span></div>
<div class="b" style="left:0px;top:277.4px;width:1178.7px;height:80px;background:linear-gradient(to bottom, rgba(26,26,26,0) 0%, rgba(26,26,26,0.36) 56%, rgba(26,26,26,0.62) 80%, rgba(26,26,26,0.9) 100%);"></div>
</div>
<div class="b" style="left:389.3px;top:836px;width:4.6px;height:4.2px;background:#1a1a1a;"></div>
<div class="b" style="left:1565.4px;top:836px;width:4.6px;height:4.2px;background:#1a1a1a;"></div>
<div class="b" style="left:905px;top:796.9px;width:148px;height:32px;background:#1a1a1a;border:1px solid #555555;border-radius:16px;"></div>
<div class="t s r" style="top:806px;font-size:15px;color:#62a3f5;letter-spacing:0.15px;left:921.7px;">Show all 41 lines</div>
<div class="t s r" style="top:885px;font-size:18.75px;color:#f0f0f0;letter-spacing:0.31px;left:378.3px;">I've created the test suite in</div>
<div class="b" style="left:620px;top:879px;width:195.7px;height:32.7px;background:#3a3a3a;border-radius:5px;"></div>
<div class="t m r" style="top:887px;font-size:16.25px;color:#f0f0f0;letter-spacing:-0.11px;left:630.7px;">tests/auth.test.ts</div>
<div class="t s r" style="top:885px;font-size:18.75px;color:#f0f0f0;letter-spacing:0.2px;left:821.7px;">with tests for JWT and API key authentication. Run</div>
<div class="b" style="left:1258.3px;top:879px;width:97.4px;height:32.7px;background:#3a3a3a;border-radius:5px;"></div>
<div class="t m r" style="top:887px;font-size:16.25px;color:#f0f0f0;letter-spacing:-0.23px;left:1268.3px;">npm test</div>
<div class="t s r" style="top:885px;font-size:18.75px;color:#f0f0f0;letter-spacing:0.2px;left:1361.7px;">to execute them.</div>
<div class="t s r" style="top:935px;font-size:15px;color:#757575;letter-spacing:0.35px;left:408.3px;">Finished in 6ms</div>
<div class="b" style="left:363px;top:981.5px;width:1232px;height:98.5px;background:#1a1a1a;"></div>
<div class="b" style="left:363px;top:981.5px;width:1232px;height:1px;background:#4a4a4a;"></div>
<div class="b" style="left:378.3px;top:990px;width:162.7px;height:30px;background:#1a1a1a;border:1px solid #4d4d4d;border-radius:15px;"></div>
<div class="t s" style="top:997px;font-size:15px;color:#d8d8d8;-webkit-text-stroke:0.4px;letter-spacing:0.27px;left:389px;">codex-mini-latest</div>
<svg class="b" style="left:514px;top:997px;" width="14.5" height="14.5" viewBox="0 0 24 24"><g fill="none" stroke="#e0e0e0" stroke-width="2.4" stroke-linecap="round" stroke-linejoin="round"><path d="M6 9l6 6 6-6"/></g></svg>
<div class="b" style="left:1545px;top:991px;width:35px;height:28px;background:#1a1a1a;border:1px solid #555555;border-radius:8px;"></div>
<div class="t s" style="top:999px;font-size:13.75px;color:#9a9a9a;font-weight:700;letter-spacing:1.83px;left:1557px;">--</div>
<div class="b" style="left:378.3px;top:1028.3px;width:1146.7px;height:44.4px;background:#2d2d2d;border:1px solid #5a9bec;border-radius:7px;"></div>
<div class="t s r" style="top:1043px;font-size:16.25px;color:#7c7c7c;letter-spacing:0.29px;left:394.3px;">Type your message... (Enter to send, Shift+Enter for new line, @ for files)</div>
<div class="b" style="left:1535px;top:1028.3px;width:45px;height:44.4px;background:#3c6194;border-radius:8px;"></div>
<svg class="b" style="left:1548px;top:1040.8px;" width="19.5" height="19.5" viewBox="0 0 24 24"><g fill="none" stroke="#9aa3b5" stroke-width="1.9" stroke-linecap="round" stroke-linejoin="round"><polygon points="3 11 22 2 13 21 11 13 3 11"/></g></svg>
<svg class="b" style="left:1615px;top:13px;" width="20" height="20" viewBox="0 0 24 24"><path fill="#d0d0d0" d="M8 16h8v2H8zm0-4h8v2H8zm6-10H6c-1.1 0-2 .9-2 2v16c0 1.1.89 2 1.99 2H18c1.1 0 2-.9 2-2V8l-6-6zm4 18H6V4h7v5h5v11z"/></svg>
<div class="t s" style="top:15px;font-size:17.5px;color:#ffffff;-webkit-text-stroke:0.4px;letter-spacing:0.23px;left:1641px;">All Session Edits</div>
<svg class="b" style="left:1782.5px;top:14.75px;" width="15.5" height="15.5" viewBox="0 0 24 24"><g fill="none" stroke="#b3b3b3" stroke-width="2.3" stroke-linecap="round" stroke-linejoin="round"><path d="M6 9l6 6 6-6"/></g></svg>
<div class="t s r" style="top:38px;font-size:15px;color:#b3b3b3;letter-spacing:0.27px;left:1641px;">in this Session</div>
<div class="b" style="left:1600px;top:65px;width:320px;height:1px;background:#484848;"></div>
<svg class="b" style="left:1617.5px;top:78.2px;" width="17" height="17" viewBox="0 0 24 24"><g fill="none" stroke="#9a9a9a" stroke-width="2.3" stroke-linecap="round" stroke-linejoin="round"><path d="M6 9l6 6 6-6"/></g></svg>
<svg class="b" style="left:1666px;top:77px;" width="20.5" height="20.5" viewBox="0 0 24 24"><g fill="none" stroke="#b3b3b3" stroke-width="1.8" stroke-linecap="round" stroke-linejoin="round"><path d="M3.5 19V6.2c0-.9.7-1.7 1.7-1.7h4.3l2.2 2.5h6.6c.9 0 1.7.8 1.7 1.7V10.5"/><path d="M3.5 19l2.7-7.3c.2-.7.9-1.2 1.6-1.2h13.3c.8 0 1.4.8 1.1 1.6L20 18c-.2.6-.8 1-1.4 1H3.5Z"/></g></svg>
<div class="t s r" style="top:79px;font-size:17.5px;color:#b3b3b3;letter-spacing:0.13px;left:1691.5px;">tests</div>
<div class="b" style="left:1888px;top:76px;width:16px;height:22px;background:#3a3a3a;border-radius:4.5px;"></div>
<div class="t s r" style="top:81px;font-size:11.5px;color:#808080;left:1892.8px;">1</div>
<div class="t s r" style="top:112px;font-size:17.5px;color:#b3b3b3;letter-spacing:0.19px;left:1686.3px;">auth.test.ts</div>
<div class="t s r" style="top:164px;font-size:17.5px;color:#60a5fa;letter-spacing:0.35px;left:1638px;">Show all uncommitted files (6)</div>
<div class="b" style="left:1600px;top:781.5px;width:320px;height:1px;background:#484848;"></div>
<div class="b" style="left:1600px;top:823px;width:320px;height:1px;background:#484848;"></div>
<svg class="b" style="left:1616.3px;top:793.1px;" width="17" height="17" viewBox="0 0 24 24"><g fill="none" stroke="#ffffff" stroke-width="2.6" stroke-linecap="round" stroke-linejoin="round"><path d="M6 9l6 6 6-6"/></g></svg>
<svg class="b" style="left:1642.5px;top:794.3px;" width="18" height="18" viewBox="0 0 24 24"><path fill="#ffffff" d="M22 11V3h-7v3H9V3H2v8h7V8h2v10h4v3h7v-8h-7v3h-2V8h2v3h7zM7 9H4V5h3v4zm10 6h3v4h-3v-4zm0-10h3v4h-3V5z"/></svg>
<div class="t s" style="top:795px;font-size:16.25px;color:#ffffff;-webkit-text-stroke:0.4px;letter-spacing:-0.24px;left:1668px;">main</div>
<div class="t s" style="top:845px;font-size:14.5px;color:#ffffff;font-weight:700;letter-spacing:-0.36px;left:1615.3px;">Commit</div>
<div class="b" style="left:1792.3px;top:839.4px;width:112.5px;height:25.3px;background:#1a1a1a;border:1px solid #4a4a4a;border-radius:5px;"></div>
<div class="t s r" style="top:845px;font-size:13.2px;color:#b3b3b3;letter-spacing:0.09px;left:1800.3px;">Manual</div>
<div class="t s r" style="top:845px;font-size:13.2px;color:#b3b3b3;letter-spacing:0.26px;left:1859.7px;">Smart</div>
<div class="b" style="left:1615px;top:875.3px;width:289.8px;height:84.2px;background:#2d2d2d;border:1px solid #4a4a4a;border-radius:5px;"></div>
<div class="t s r" style="top:890px;font-size:13.75px;color:#7c7c7c;letter-spacing:0.43px;left:1626px;">Enter commit message...</div>
<svg class="b" style="left:1894px;top:949px;" width="9" height="9" viewBox="0 0 10 10"><path d="M9 2L2 9M9 6L6 9" stroke="#8a8a8a" stroke-width="1.2" fill="none"/></svg>
<div class="b" style="left:1615px;top:969px;width:289.8px;height:39.7px;background:#3f699f;border-radius:5px;"></div>
<div class="t s" style="top:981px;font-size:16.25px;color:#99a8bf;-webkit-text-stroke:0.6px;letter-spacing:0.35px;left:1718.25px;">Commit (0)</div>
<div class="b" style="left:1615px;top:1024px;width:289.8px;height:1px;background:#454545;"></div>
<div class="t s" style="top:1046px;font-size:13.75px;color:#60a5fa;-webkit-text-stroke:0.4px;letter-spacing:-0.17px;left:1691.3px;">Show Recent Commits</div>
</div>
</body></html>
